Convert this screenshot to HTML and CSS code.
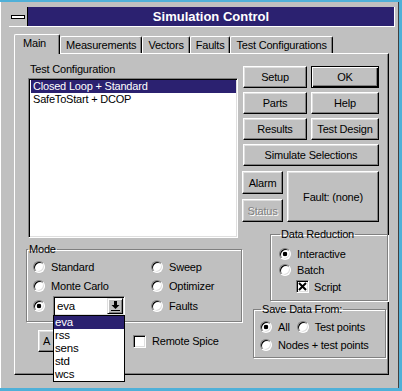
FILE: index.html
```html
<!DOCTYPE html>
<html lang="en">
<head>
  <meta charset="UTF-8">
  <meta name="viewport" content="width=device-width, initial-scale=1.0">
  <title>Simulation Control</title>
  <link rel="stylesheet" href="styles.css">
</head>
<body>
  <div class="window">
    <div class="titlebar">
      <div class="sysmenu"><span class="sysmenu-bar"></span></div>
      <div class="caption">Simulation Control</div>
    </div>

    <div class="tabs">
      <div class="tab active">Main</div>
      <div class="tab">Measurements</div>
      <div class="tab">Vectors</div>
      <div class="tab">Faults</div>
      <div class="tab">Test Configurations</div>
    </div>

    <div class="panel">
      <div class="left-col">
        <div class="field-label">Test Configuration</div>
        <div class="listbox">
          <div class="list-item selected">Closed Loop + Standard</div>
          <div class="list-item">SafeToStart + DCOP</div>
        </div>

        <fieldset class="group mode">
          <legend>Mode</legend>
          <div class="mode-grid">
            <div class="option"><span class="radio"></span>Standard</div>
            <div class="option"><span class="radio"></span>Sweep</div>
            <div class="option"><span class="radio"></span>Monte Carlo</div>
            <div class="option"><span class="radio"></span>Optimizer</div>
            <div class="option">
              <span class="radio checked"></span>
              <div class="combo">
                <span class="combo-value">eva</span>
                <span class="combo-btn">
                  <svg width="9" height="10" viewBox="0 0 9 10">
                    <path d="M3 0h3v4h2.5L4.5 8 0.5 4H3z" fill="#000"/>
                    <rect x="0" y="9" width="9" height="1" fill="#000"/>
                  </svg>
                </span>
                <div class="combo-list">
                  <div class="combo-item selected">eva</div>
                  <div class="combo-item">rss</div>
                  <div class="combo-item">sens</div>
                  <div class="combo-item">std</div>
                  <div class="combo-item">wcs</div>
                </div>
              </div>
            </div>
            <div class="option"><span class="radio"></span>Faults</div>
          </div>
        </fieldset>

        <div class="bottom-row">
          <button class="btn analyze">A</button>
          <div class="option remote"><span class="check"></span>Remote Spice</div>
        </div>
      </div>

      <div class="right-col">
        <div class="btn-grid">
          <button class="btn">Setup</button>
          <button class="btn default">OK</button>
          <button class="btn">Parts</button>
          <button class="btn">Help</button>
          <button class="btn">Results</button>
          <button class="btn">Test Design</button>
          <button class="btn wide">Simulate Selections</button>
        </div>

        <div class="status-block">
          <div class="status-stack">
            <button class="btn small">Alarm</button>
            <button class="btn small" disabled>Status</button>
          </div>
          <button class="btn fault">Fault: (none)</button>
        </div>

        <fieldset class="group reduction">
          <legend>Data Reduction</legend>
          <div class="option row"><span class="radio checked"></span>Interactive</div>
          <div class="option row"><span class="radio"></span>Batch</div>
          <div class="option row script">
            <span class="check checked">
              <svg width="9" height="9" viewBox="0 0 9 9">
                <path d="M1 1L8 8M8 1L1 8" stroke="#000" stroke-width="2"/>
              </svg>
            </span>Script
          </div>
        </fieldset>

        <fieldset class="group save">
          <legend>Save Data From:</legend>
          <div class="save-row">
            <div class="option"><span class="radio checked"></span>All</div>
            <div class="option test-points"><span class="radio"></span>Test points</div>
          </div>
          <div class="save-row">
            <div class="option"><span class="radio"></span>Nodes + test points</div>
          </div>
        </fieldset>
      </div>
    </div>
  </div>
</body>
</html>
```

FILE: styles.css
```css
body {
  margin: 0;
  width: 402px;
  height: 391px;
  overflow: hidden;
  background-color: #4fb0d8;
  font-family: "Liberation Sans", Arial, sans-serif;
  font-size: 11px;
  letter-spacing: -0.2px;
  color: #000;
  white-space: nowrap;
}

.window {
  box-sizing: border-box;
  width: 399px;
  height: 386px;
  margin-top: 2px;
  padding: 5px 3px 0 8px;
  background-color: #c0c0c0;
  border-right: 1px solid #404040;
  border-left: 1px solid #fff;
}

/* title bar */
.titlebar {
  display: flex;
  height: 19px;
  border-bottom: 1px solid #fff;
}

.sysmenu {
  width: 18px;
  display: flex;
  align-items: center;
  justify-content: center;
  background-color: #c0c0c0;
  border-right: 1px solid #000;
}

.sysmenu-bar {
  width: 12px;
  height: 2px;
  background-color: #fff;
  border: 1px solid #000;
}

.caption {
  flex: 1;
  background-color: #2b2170;
  color: #fff;
  font-weight: bold;
  font-size: 13px;
  letter-spacing: 0;
  line-height: 19px;
  text-align: center;
  border-right: 1px solid #fff;
}

/* tabs */
.tabs {
  display: flex;
  align-items: flex-end;
  height: 19px;
  margin: 7px 0 0 5px;
  position: relative;
  z-index: 1;
}

.tab {
  height: 16px;
  line-height: 16px;
  padding: 0 5px;
  border-top: 1px solid #fff;
  border-left: 1px solid #fff;
  border-right: 1px solid #000;
  border-radius: 2px 2px 0 0;
  box-shadow: inset -1px 0 #808080;
}

.tab.active {
  height: 19px;
  line-height: 16px;
  margin-bottom: -1px;
  padding: 0 13px 0 8px;
  background-color: #c0c0c0;
}

/* main panel */
.panel {
  display: flex;
  box-sizing: border-box;
  width: 375px;
  height: 322px;
  margin-left: 5px;
  padding-left: 11px;
  border-top: 1px solid #fff;
  border-left: 1px solid #fff;
  border-right: 1px solid #000;
  border-bottom: 1px solid #000;
  box-shadow: inset -1px -1px #808080;
}

.left-col {
  width: 214px;
}

.field-label {
  margin: 8px 0 0 4px;
  line-height: 14px;
}

.listbox {
  box-sizing: border-box;
  width: 210px;
  height: 160px;
  margin: 2px 0 0 2px;
  padding: 1px;
  background-color: #fff;
  border-top: 1px solid #808080;
  border-left: 1px solid #808080;
  border-right: 1px solid #fff;
  border-bottom: 1px solid #fff;
  box-shadow: inset 1px 1px #000, inset -1px -1px #dfdfdf;
}

.list-item {
  height: 13px;
  line-height: 13px;
  padding-left: 2px;
  margin-left: 1px;
}

.list-item.selected, .combo-item.selected {
  background-color: #2b2170;
  color: #fff;
}

/* group boxes */
.group {
  margin: 0;
  padding: 0;
  border: 1px solid #808080;
  box-shadow: inset 1px 1px #fff, 1px 1px #fff;
  min-width: 0;
}

.group legend {
  margin-left: 1px;
  padding: 0 1px;
  line-height: 12px;
}

.mode {
  width: 214px;
  margin-top: 5px;
}

.mode-grid {
  display: grid;
  grid-template-columns: 118px 1fr;
  grid-template-rows: 19px 19px 22px;
  padding: 2px 0 4px 6px;
}

.option {
  display: flex;
  align-items: center;
  gap: 6px;
}

.radio {
  box-sizing: border-box;
  width: 12px;
  height: 12px;
  flex: none;
  border-radius: 50%;
  background-color: #fff;
  border: 1px solid;
  border-color: #808080 #fff #fff #808080;
  box-shadow: inset 1px 1px #000, inset -1px -1px #dfdfdf;
}

.radio.checked {
  background: radial-gradient(circle, #000 0 2px, #fff 2.6px);
}

.check {
  box-sizing: border-box;
  width: 13px;
  height: 13px;
  flex: none;
  display: flex;
  align-items: center;
  justify-content: center;
  background-color: #fff;
  border: 1px solid;
  border-color: #808080 #fff #fff #808080;
  box-shadow: inset 1px 1px #000, inset -1px -1px #dfdfdf;
}

/* combo box with open list */
.combo {
  position: relative;
  box-sizing: border-box;
  display: flex;
  align-items: center;
  justify-content: space-between;
  width: 72px;
  height: 20px;
  margin-left: 2px;
  padding: 0 1px 0 3px;
  background-color: #fff;
  border-top: 1px solid #808080;
  border-left: 1px solid #808080;
  border-right: 1px solid #fff;
  border-bottom: 1px solid #fff;
  box-shadow: inset 1px 1px #000, inset -1px -1px #dfdfdf;
  font-size: 11.5px;
}

.combo-btn {
  box-sizing: border-box;
  width: 16px;
  height: 16px;
  display: flex;
  align-items: center;
  justify-content: center;
  background-color: #c0c0c0;
  border-top: 1px solid #dfdfdf;
  border-left: 1px solid #dfdfdf;
  border-right: 1px solid #000;
  border-bottom: 1px solid #000;
  box-shadow: inset 1px 1px #fff, inset -1px -1px #808080;
}

.combo-list {
  position: absolute;
  top: 100%;
  left: -1px;
  width: 72px;
  box-sizing: border-box;
  background-color: #fff;
  border: 1px solid #000;
  z-index: 2;
}

.combo-item {
  height: 13px;
  line-height: 13px;
  padding-left: 1px;
}

.bottom-row {
  display: flex;
  align-items: center;
  margin-top: 8px;
}

/* buttons */
.btn {
  box-sizing: border-box;
  margin: 0;
  padding: 0;
  font: inherit;
  letter-spacing: inherit;
  color: #000;
  background-color: #c0c0c0;
  border-top: 1px solid #fff;
  border-left: 1px solid #fff;
  border-right: 1px solid #000;
  border-bottom: 1px solid #000;
  box-shadow: inset -1px -1px #808080, inset 1px 1px #dfdfdf;
}

.btn.default {
  border: 1px solid #000;
  box-shadow: inset 1px 1px #fff, inset -1px -1px #000, inset -2px -2px #808080;
}

.btn:disabled {
  color: #808080;
  text-shadow: 1px 1px #fff;
}

.analyze {
  width: 80px;
  height: 22px;
  padding-left: 4px;
  text-align: left;
  margin-left: 12px;
}

.remote {
  margin-left: 15px;
}

.right-col {
  width: 137px;
  margin-left: 2px;
}

.btn-grid {
  display: grid;
  grid-template-columns: 64px 68px;
  grid-auto-rows: 22px;
  gap: 4px;
  margin: 12px 0 0 1px;
}

.btn-grid .wide {
  grid-column: span 2;
}

.status-block {
  display: flex;
  gap: 4px;
  margin-top: 5px;
}

.status-stack {
  display: flex;
  flex-direction: column;
  gap: 5px;
}

.btn.small {
  width: 41px;
  height: 23px;
}

.btn.fault {
  width: 92px;
  height: 51px;
}

.reduction {
  width: 108px;
  margin: 6px 0 0 28px;
  padding: 6px 0 5px 8px;
}

.reduction .row {
  height: 16px;
}

.reduction .script {
  height: 17px;
  margin-left: 17px;
  gap: 5px;
}

.save {
  width: 125px;
  margin: 2px 0 0 11px;
  padding: 3px 0 3px 6px;
}

.save-row {
  display: flex;
  height: 18px;
}

.test-points {
  margin-left: 7px;
}
```
